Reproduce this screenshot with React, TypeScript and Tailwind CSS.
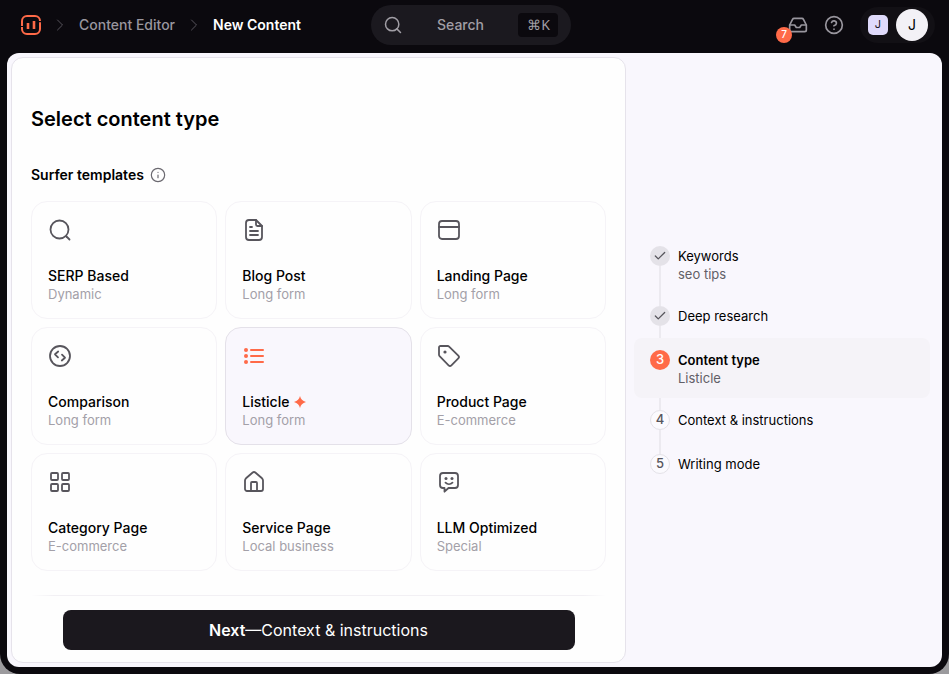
import type { ReactNode } from 'react'
import { Check, ChevronRight, CircleHelp, Inbox, Info, Search } from 'lucide-react'
import { clsx } from 'clsx'

function Glyph({ children }: { children: ReactNode }) {
  return (
    <svg
      className="size-6"
      viewBox="0 0 24 24"
      fill="none"
      stroke="currentColor"
      strokeWidth={1.8}
      strokeLinecap="round"
      strokeLinejoin="round"
      aria-hidden="true"
    >
      {children}
    </svg>
  )
}

const TEMPLATES = [
  {
    name: 'SERP Based',
    kind: 'Dynamic',
    icon: (
      <>
        <circle cx="11.5" cy="11.5" r="9" />
        <path d="m18.5 18.5 3 3" />
      </>
    ),
  },
  {
    name: 'Blog Post',
    kind: 'Long form',
    icon: (
      <>
        <path d="M14 2H7a3 3 0 0 0-3 3v14a3 3 0 0 0 3 3h10a3 3 0 0 0 3-3V8z" />
        <path d="M14 2v4.5A1.5 1.5 0 0 0 15.5 8H20M8 9h2M8 13h8M8 17h8" />
      </>
    ),
  },
  {
    name: 'Landing Page',
    kind: 'Long form',
    icon: (
      <>
        <rect x="2" y="3" width="20" height="18" rx="3" />
        <path d="M2 9h20" />
      </>
    ),
  },
  {
    name: 'Comparison',
    kind: 'Long form',
    icon: (
      <>
        <circle cx="12" cy="12" r="10" />
        <path d="M10.2 7.5 7 10.3l3 3M14 10.7l3 3-3.2 2.8" />
      </>
    ),
  },
  {
    name: 'Listicle',
    kind: 'Long form',
    selected: true,
    icon: (
      <>
        <path d="M9 6h12M9 12h12M9 18h12" strokeWidth={2} />
        <g fill="currentColor" stroke="none">
          <circle cx="4" cy="6" r="2" />
          <circle cx="4" cy="12" r="2" />
          <circle cx="4" cy="18" r="2" />
        </g>
      </>
    ),
  },
  {
    name: 'Product Page',
    kind: 'E-commerce',
    icon: (
      <>
        <path d="M3.5 2h7.2c.6 0 1 .2 1.4.6l9.2 9c.8.8.8 2 0 2.8l-6.9 6.9c-.8.8-2 .8-2.8 0l-9-9.2C2.2 11.7 2 11.2 2 10.7V3.5C2 2.7 2.7 2 3.5 2z" />
        <circle cx="8" cy="8" r="1.6" fill="currentColor" stroke="none" />
      </>
    ),
  },
  {
    name: 'Category Page',
    kind: 'E-commerce',
    icon: (
      <>
        <rect x="3" y="3" width="7" height="7" rx="1" />
        <rect x="14" y="3" width="7" height="7" rx="1" />
        <rect x="3" y="14" width="7" height="7" rx="1" />
        <rect x="14" y="14" width="7" height="7" rx="1" />
      </>
    ),
  },
  {
    name: 'Service Page',
    kind: 'Local business',
    icon: (
      <>
        <path d="M3 10.5c0-.9.4-1.6 1-2.2l6.7-5.8a2 2 0 0 1 2.6 0L20 8.3c.6.6 1 1.3 1 2.2V19a2 2 0 0 1-2 2H5a2 2 0 0 1-2-2z" />
        <path d="M9 21v-8a1 1 0 0 1 1-1h4a1 1 0 0 1 1 1v8" />
      </>
    ),
  },
  {
    name: 'LLM Optimized',
    kind: 'Special',
    icon: (
      <>
        <path d="M6 3h12a3 3 0 0 1 3 3v9a3 3 0 0 1-3 3h-6.5l-4 3.7V18H6a3 3 0 0 1-3-3V6a3 3 0 0 1 3-3z" />
        <path d="M8.5 12.7c2 2 5 2 7 0" />
        <circle cx="9" cy="8.5" r="1.5" fill="currentColor" stroke="none" />
        <circle cx="15" cy="8.5" r="1.5" fill="currentColor" stroke="none" />
      </>
    ),
  },
]

const STEPS = [
  { title: 'Keywords', detail: 'seo tips', state: 'done' },
  { title: 'Deep research', state: 'done' },
  { title: 'Content type', detail: 'Listicle', state: 'active' },
  { title: 'Context & instructions', state: 'todo' },
  { title: 'Writing mode', state: 'todo' },
]

function Logo() {
  return (
    <svg className="size-5" viewBox="0 0 20 20" fill="none" stroke="#ff6a48" strokeWidth={2} aria-hidden="true">
      <path d="M1 11V6a5 5 0 0 1 5-5h8a5 5 0 0 1 5 5" />
      <path d="M19 7.2V14a5 5 0 0 1-5 5H6a5 5 0 0 1-5-5v-2" />
      <path d="M7 8v6M13 6v8" strokeWidth={2.6} />
    </svg>
  )
}

function Header() {
  return (
    <header className="relative flex h-[53px] items-center justify-between pb-1 pl-[21px] pr-[14px]">
      <nav aria-label="Breadcrumb" className="flex items-center text-sm">
        <a href="#" aria-label="Home">
          <Logo />
        </a>
        <ChevronRight className="mx-[9px] size-5 text-[#57545c]" strokeWidth={1.2} />
        <a href="#" className="font-medium text-[#99969e]">Content Editor</a>
        <ChevronRight className="mx-[9px] size-5 text-[#57545c]" strokeWidth={1.2} />
        <span className="font-semibold text-white">New Content</span>
      </nav>

      <button className="absolute left-1/2 top-[5px] flex h-10 w-[200px] -translate-x-[104px] items-center justify-between rounded-full bg-[#1b191f] px-3 text-sm text-[#a19ea5]">
        <Search className="size-5" strokeWidth={1.8} />
        <span className="font-medium">Search</span>
        <kbd className="flex h-6 w-10 items-center justify-center rounded bg-[#0b090e] font-sans text-sm">⌘K</kbd>
      </button>

      <div className="flex items-center">
        <button aria-label="Notifications" className="relative text-[#99969e]">
          <Inbox className="size-5" strokeWidth={2} />
          <span className="absolute -left-3 top-3 flex size-4 items-center justify-center rounded-full bg-[#ff6a48] text-[10px] font-medium text-white">
            7
          </span>
        </button>
        <button aria-label="Help" className="ml-4 text-[#99969e]">
          <CircleHelp className="size-5" strokeWidth={2} />
        </button>
        <button aria-label="Account" className="ml-4 flex h-9 items-center gap-2 rounded-full bg-[#121015] pl-2 pr-[7px]">
          <span className="flex size-5 items-center justify-center rounded-[5px] bg-[#dfdafb] text-[11px] text-[#1b191f]">
            J
          </span>
          <span className="flex size-8 items-center justify-center rounded-full bg-[#f3f1f6] text-sm text-black">J</span>
        </button>
      </div>
    </header>
  )
}

function TemplateCard({ item }: { item: (typeof TEMPLATES)[number] }) {
  return (
    <button
      aria-pressed={!!item.selected}
      className={clsx(
        'flex flex-col items-start rounded-2xl border px-4 pb-[15px] pt-4 text-left',
        item.selected ? 'border-[#e4e1e9] bg-[#f9f7fd]' : 'border-[#f5f3f7] bg-[#fefefe]'
      )}
    >
      <span className={clsx('mb-[25px]', item.selected ? 'text-[#ff6a48]' : 'text-[#57555c]')}>
        <Glyph>{item.icon}</Glyph>
      </span>
      <span className="flex items-center gap-[5px] text-sm/[18px] font-medium text-black">
        {item.name}
        {item.selected && (
          <svg className="size-3" viewBox="0 0 12 12" fill="#ff6a48" aria-hidden="true">
            <path d="M6 0c.9 3.300 2.400 4.800 6 6-3.600 1.200-5.100 2.700-6 6-.9-3.300-2.400-4.800-6-6 3.600-1.200 5.100-2.700 6-6z" />
          </svg>
        )}
      </span>
      <span className="text-[13px]/[18px] text-[#a3a0a8]">{item.kind}</span>
    </button>
  )
}

function Steps() {
  return (
    <ol className="w-full">
      {STEPS.map((step, i) => {
        const active = step.state === 'active'
        const line = 'w-[2px] bg-[#eceaf0]'
        return (
          <li
            key={step.title}
            aria-current={active ? 'step' : undefined}
            className={clsx('flex gap-2 rounded-lg px-4', active && 'bg-[#f5f3f8]')}
          >
            <div className="flex w-5 flex-col items-center">
              <span className={clsx('h-3', i > 0 && !active && line)} />
              <span
                className={clsx(
                  'flex size-5 shrink-0 items-center justify-center rounded-full text-[13px] font-medium',
                  step.state === 'done' && 'bg-[#e4e2e8] text-[#57555c]',
                  active && 'bg-[#ff6a48] text-white',
                  step.state === 'todo' && 'border border-[#e4e2e8] bg-[#fbfafe] text-[#57555c]'
                )}
              >
                {step.state === 'done' ? <Check className="size-3.5" strokeWidth={2.2} /> : i + 1}
              </span>
              <span className={clsx('flex-1', i < STEPS.length - 1 && !active && line)} />
            </div>
            <div className="min-h-11 py-3 text-[13px]/[18px]">
              <p className={clsx('pt-px text-black', active && 'font-semibold')}>{step.title}</p>
              {step.detail && <p className="-mb-px text-[#625f67]">{step.detail}</p>}
            </div>
          </li>
        )
      })}
    </ol>
  )
}

export default function App() {
  return (
    <div className="min-h-screen bg-[#9b9a9d] font-[Inter,sans-serif] antialiased">
      <div className="flex min-h-screen flex-col rounded-b-[20px] bg-[#0b090e]">
        <Header />
        <main className="mx-[7px] mb-[7px] flex flex-1 rounded-xl bg-[#f9f7fd] p-1">
          <section className="flex min-w-0 flex-1 flex-col rounded-xl border border-[#e6e3eb] bg-[#fefefe] px-[19px] pb-3">
            <h1 className="pt-[47px] text-xl/7 font-semibold text-black">Select content type</h1>
            <div className="mt-8 flex items-center gap-[6px]">
              <h2 className="text-sm/5 font-semibold text-black">Surfer templates</h2>
              <Info className="size-4 text-[#6b6970]" strokeWidth={1.8} />
            </div>

            <div className="mt-4 grid grid-cols-3 gap-2">
              {TEMPLATES.map(item => (
                <TemplateCard key={item.name} item={item} />
              ))}
            </div>

            <div className="mt-auto flex flex-col items-center pt-4">
              <div className="h-px w-full bg-linear-[90deg,transparent,#f2f0f4_4%,#f2f0f4_96%,transparent]" />
              <button className="mt-[14px] h-10 w-full max-w-lg rounded-lg bg-[#1b181e] text-base text-white">
                <span className="font-semibold">Next</span>—Context &amp; instructions
              </button>
            </div>
          </section>

          <aside className="flex w-[312px] shrink-0 items-center px-2">
            <Steps />
          </aside>
        </main>
      </div>
    </div>
  )
}
